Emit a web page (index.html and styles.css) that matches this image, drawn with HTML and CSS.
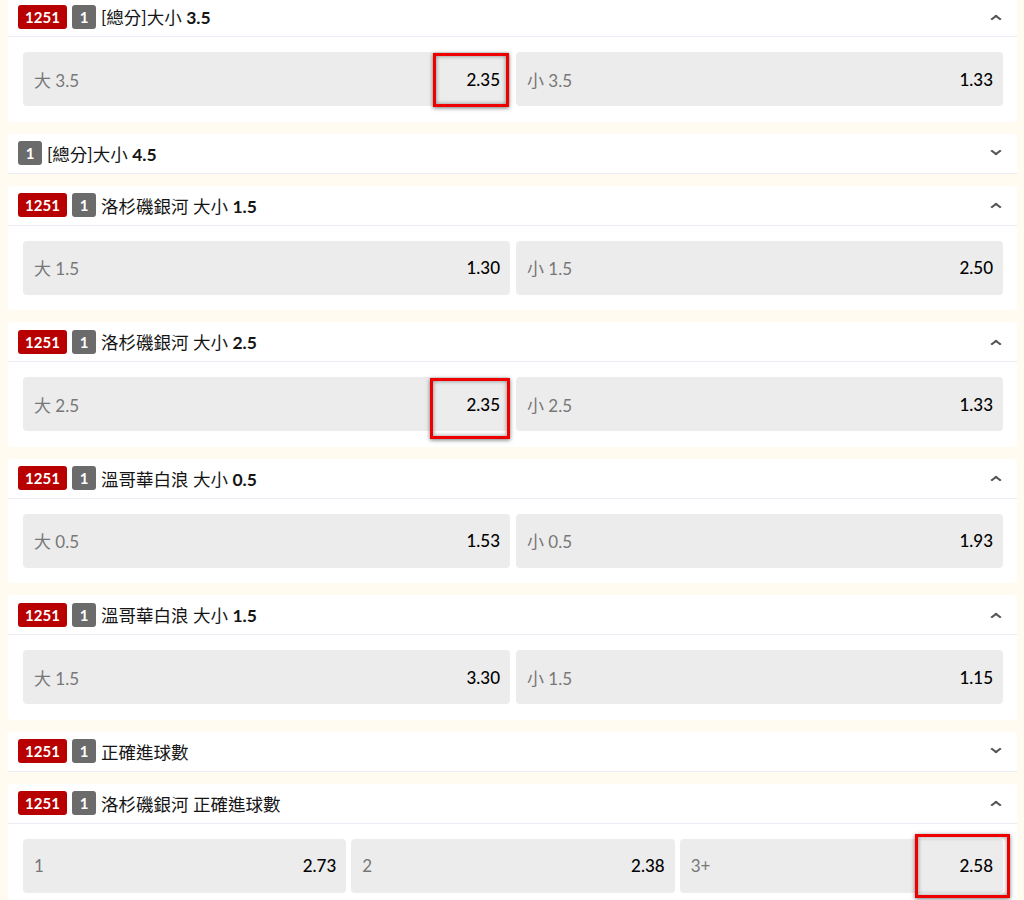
FILE: index.html
```html
<!DOCTYPE html>
<html lang="zh-Hant">
<head>
    <meta charset="UTF-8">
    <title>大小盤口</title>
    <link rel="stylesheet" href="styles.css">
</head>
<body>

<div class="market-list">

    <!-- [總分]大小 3.5 -->
    <section class="market">
        <div class="market-head">
            <span class="badge badge-red">1251</span>
            <span class="badge badge-grey">1</span>
            <span class="market-title">[總分]大小 <b>3.5</b></span>
            <span class="chevron up"></span>
        </div>
        <div class="market-body cols-2">
            <div class="odd">
                <span class="odd-label">大 3.5</span>
                <span class="odd-price">2.35</span>
                <span class="mark mark-a"></span>
            </div>
            <div class="odd">
                <span class="odd-label">小 3.5</span>
                <span class="odd-price">1.33</span>
            </div>
        </div>
    </section>

    <!-- [總分]大小 4.5 (collapsed) -->
    <section class="market">
        <div class="market-head">
            <span class="badge badge-grey">1</span>
            <span class="market-title">[總分]大小 <b>4.5</b></span>
            <span class="chevron down"></span>
        </div>
    </section>

    <section class="market">
        <div class="market-head">
            <span class="badge badge-red">1251</span>
            <span class="badge badge-grey">1</span>
            <span class="market-title">洛杉磯銀河 大小 <b>1.5</b></span>
            <span class="chevron up"></span>
        </div>
        <div class="market-body cols-2">
            <div class="odd">
                <span class="odd-label">大 1.5</span>
                <span class="odd-price">1.30</span>
            </div>
            <div class="odd">
                <span class="odd-label">小 1.5</span>
                <span class="odd-price">2.50</span>
            </div>
        </div>
    </section>

    <section class="market">
        <div class="market-head">
            <span class="badge badge-red">1251</span>
            <span class="badge badge-grey">1</span>
            <span class="market-title">洛杉磯銀河 大小 <b>2.5</b></span>
            <span class="chevron up"></span>
        </div>
        <div class="market-body cols-2">
            <div class="odd">
                <span class="odd-label">大 2.5</span>
                <span class="odd-price">2.35</span>
                <span class="mark mark-b"></span>
            </div>
            <div class="odd">
                <span class="odd-label">小 2.5</span>
                <span class="odd-price">1.33</span>
            </div>
        </div>
    </section>

    <section class="market">
        <div class="market-head">
            <span class="badge badge-red">1251</span>
            <span class="badge badge-grey">1</span>
            <span class="market-title">溫哥華白浪 大小 <b>0.5</b></span>
            <span class="chevron up"></span>
        </div>
        <div class="market-body cols-2">
            <div class="odd">
                <span class="odd-label">大 0.5</span>
                <span class="odd-price">1.53</span>
            </div>
            <div class="odd">
                <span class="odd-label">小 0.5</span>
                <span class="odd-price">1.93</span>
            </div>
        </div>
    </section>

    <section class="market">
        <div class="market-head">
            <span class="badge badge-red">1251</span>
            <span class="badge badge-grey">1</span>
            <span class="market-title">溫哥華白浪 大小 <b>1.5</b></span>
            <span class="chevron up"></span>
        </div>
        <div class="market-body cols-2">
            <div class="odd">
                <span class="odd-label">大 1.5</span>
                <span class="odd-price">3.30</span>
            </div>
            <div class="odd">
                <span class="odd-label">小 1.5</span>
                <span class="odd-price">1.15</span>
            </div>
        </div>
    </section>

    <!-- 正確進球數 (collapsed) -->
    <section class="market">
        <div class="market-head">
            <span class="badge badge-red">1251</span>
            <span class="badge badge-grey">1</span>
            <span class="market-title">正確進球數</span>
            <span class="chevron down"></span>
        </div>
    </section>

    <section class="market">
        <div class="market-head">
            <span class="badge badge-red">1251</span>
            <span class="badge badge-grey">1</span>
            <span class="market-title">洛杉磯銀河 正確進球數</span>
            <span class="chevron up"></span>
        </div>
        <div class="market-body cols-3">
            <div class="odd">
                <span class="odd-label">1</span>
                <span class="odd-price">2.73</span>
            </div>
            <div class="odd">
                <span class="odd-label">2</span>
                <span class="odd-price">2.38</span>
            </div>
            <div class="odd">
                <span class="odd-label">3+</span>
                <span class="odd-price">2.58</span>
                <span class="mark mark-c"></span>
            </div>
        </div>
    </section>

</div>

</body>
</html>
```

FILE: styles.css
```css
/* Basic reset */
* {
    box-sizing: border-box;
    margin: 0;
    padding: 0;
}

:root {
    --page-bg: #fffbf1;
    --card-bg: #ffffff;
    --line: #ebebf3;
    --odd-bg: #ececec;
    --red: #b80000;
    --grey: #6b6b6b;
    --label: #777777;
    --text: #111111;
}

body {
    font-family: Lato, "Noto Sans CJK TC", sans-serif;
    background-color: var(--page-bg);
    color: var(--text);
    padding: 0 7px 0 8px;
    overflow: hidden;
}

/* List of markets */
.market-list {
    display: flex;
    flex-direction: column;
    gap: 12px;
    margin-top: -3px;
}

.market {
    background-color: var(--card-bg);
    border-radius: 4px;
}

/* Header row */
.market-head {
    display: flex;
    align-items: center;
    height: 40px;
    padding: 0 10px;
    border-bottom: 1px solid var(--line);
}

.badge {
    display: inline-flex;
    align-items: center;
    justify-content: center;
    height: 24px;
    margin-right: 5px;
    border-radius: 3px;
    color: #ffffff;
    font-size: 15px;
    font-weight: 700;
}

.badge-red {
    width: 49px;
    background-color: var(--red);
}

.badge-grey {
    width: 24px;
    background-color: var(--grey);
}

.market-title {
    flex: 1;
    font-size: 17.5px;
    color: #151515;
}

.market-title b {
    font-weight: 700;
}

/* Chevron toggles */
.chevron {
    width: 10px;
    height: 10px;
    margin-right: 6px;
    border-left: 3px solid #555555;
    border-top: 3px solid #555555;
    transform: scale(0.8, 0.6) rotate(45deg);
}

.chevron.up {
    margin-top: 4px;
}

.chevron.down {
    margin-top: -4px;
    transform: scale(0.8, 0.6) rotate(225deg);
}

/* Odds buttons */
.market-body {
    display: grid;
    gap: 6px;
    padding: 15px 14px 15.5px 15px;
}

.cols-2 {
    grid-template-columns: 1fr 1fr;
}

.cols-3 {
    grid-template-columns: 1fr 1fr 1fr;
    gap: 5px;
}

.odd {
    position: relative;
    display: flex;
    align-items: center;
    justify-content: space-between;
    height: 54px;
    padding: 0 10px 0 11px;
    background-color: var(--odd-bg);
    border-radius: 4px;
    font-size: 17px;
}

.odd-label {
    color: var(--label);
}

.odd-price {
    color: #000000;
    font-weight: 500;
}

/* Red annotation boxes drawn over the prices */
.mark {
    position: absolute;
    border: 3px solid #ee0000;
    box-shadow: 0 1px 4px rgba(0, 0, 0, 0.55), inset 0 0 4px rgba(0, 0, 0, 0.45);
}

.mark-a {
    top: 1px;
    right: 1px;
    width: 76px;
    height: 54px;
}

.mark-b {
    top: 1px;
    right: 0;
    width: 80px;
    height: 61px;
}

.mark-c {
    top: -5px;
    right: -7px;
    width: 95px;
    height: 64px;
}
```
